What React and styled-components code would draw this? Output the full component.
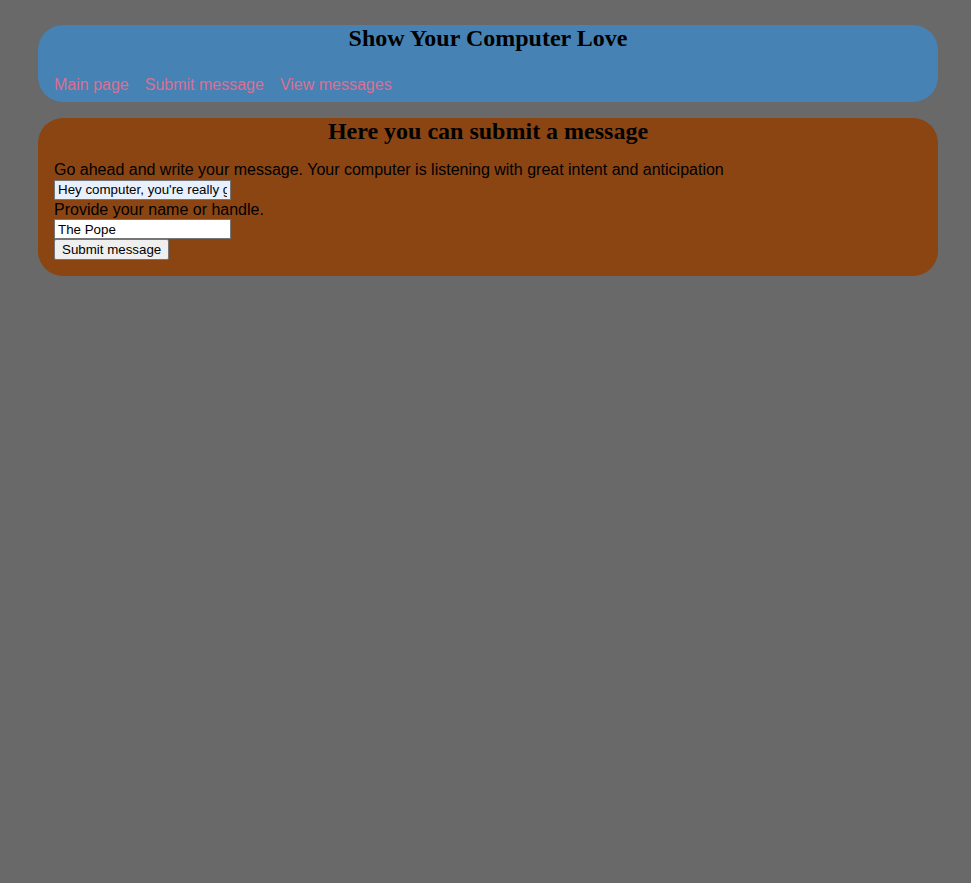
import React from 'react';
import styled, { createGlobalStyle } from 'styled-components';

const GlobalStyle = createGlobalStyle`
  html, body {
    margin: 0;
    padding: 0;
    background: #696969;
  }
  body {
    font-family: "Liberation Sans", Arial, sans-serif;
  }
`;

const Page = styled.div`
  display: flex;
  flex-direction: column;
  gap: 16px;
  width: 900px;
  padding: 25px 0 0 38px;
`;

const Panel = styled.section`
  background: ${p => p.$bg};
  border-radius: 25px;
  padding: 0 16px ${p => p.$bottom}px;
`;

const Title = styled.h2`
  margin: 0;
  font-family: "Liberation Serif", "Times New Roman", serif;
  font-size: 24px;
  font-weight: bold;
  line-height: 27px;
  text-align: center;
  color: #000;
`;

const Nav = styled.nav`
  display: flex;
  gap: 16px;
  margin-top: 23px;
`;

const NavLink = styled.a`
  color: #db7093;
  font-size: 16px;
  line-height: 19px;
  text-decoration: none;
  cursor: pointer;
`;

const Form = styled.form`
  display: flex;
  flex-direction: column;
  align-items: flex-start;
  margin-top: 15px;
`;

const Label = styled.label`
  font-size: 16px;
  line-height: 19.5px;
  color: #000;
`;

const TextInput = styled.input`
  box-sizing: border-box;
  width: 177px;
  height: 20px;
  margin: 0;
  padding: 1px 3px;
  border: 1px solid #767676;
  background: ${p => (p.$filled ? '#e8f0fe' : '#fff')};
  font-family: "Liberation Sans", Arial, sans-serif;
  font-size: 13.33px;
  color: #000;
  outline: none;
`;

const SubmitButton = styled.button`
  box-sizing: border-box;
  height: 21px;
  margin: 0;
  padding: 0 7px;
  border: 1px solid #767676;
  border-radius: 2px;
  background: #efefef;
  font-family: "Liberation Sans", Arial, sans-serif;
  font-size: 13.33px;
  color: #000;
  cursor: pointer;
`;

const App = () => {
  return (
    <>
      <GlobalStyle />
      <Page>
        <Panel $bg="#4682b4" $bottom={8}>
          <Title>Show Your Computer Love</Title>
          <Nav>
            <NavLink>Main page</NavLink>
            <NavLink>Submit message</NavLink>
            <NavLink>View messages</NavLink>
          </Nav>
        </Panel>
        <Panel $bg="#8b4513" $bottom={16}>
          <Title>Here you can submit a message</Title>
          <Form onSubmit={e => e.preventDefault()}>
            <Label htmlFor="msg">Go ahead and write your message. Your computer is listening with great intent and anticipation</Label>
            <TextInput id="msg" $filled defaultValue="Hey computer, you're really great!" />
            <Label htmlFor="name">Provide your name or handle.</Label>
            <TextInput id="name" defaultValue="The Pope" />
            <SubmitButton type="submit">Submit message</SubmitButton>
          </Form>
        </Panel>
      </Page>
    </>
  );
};

export default App;
